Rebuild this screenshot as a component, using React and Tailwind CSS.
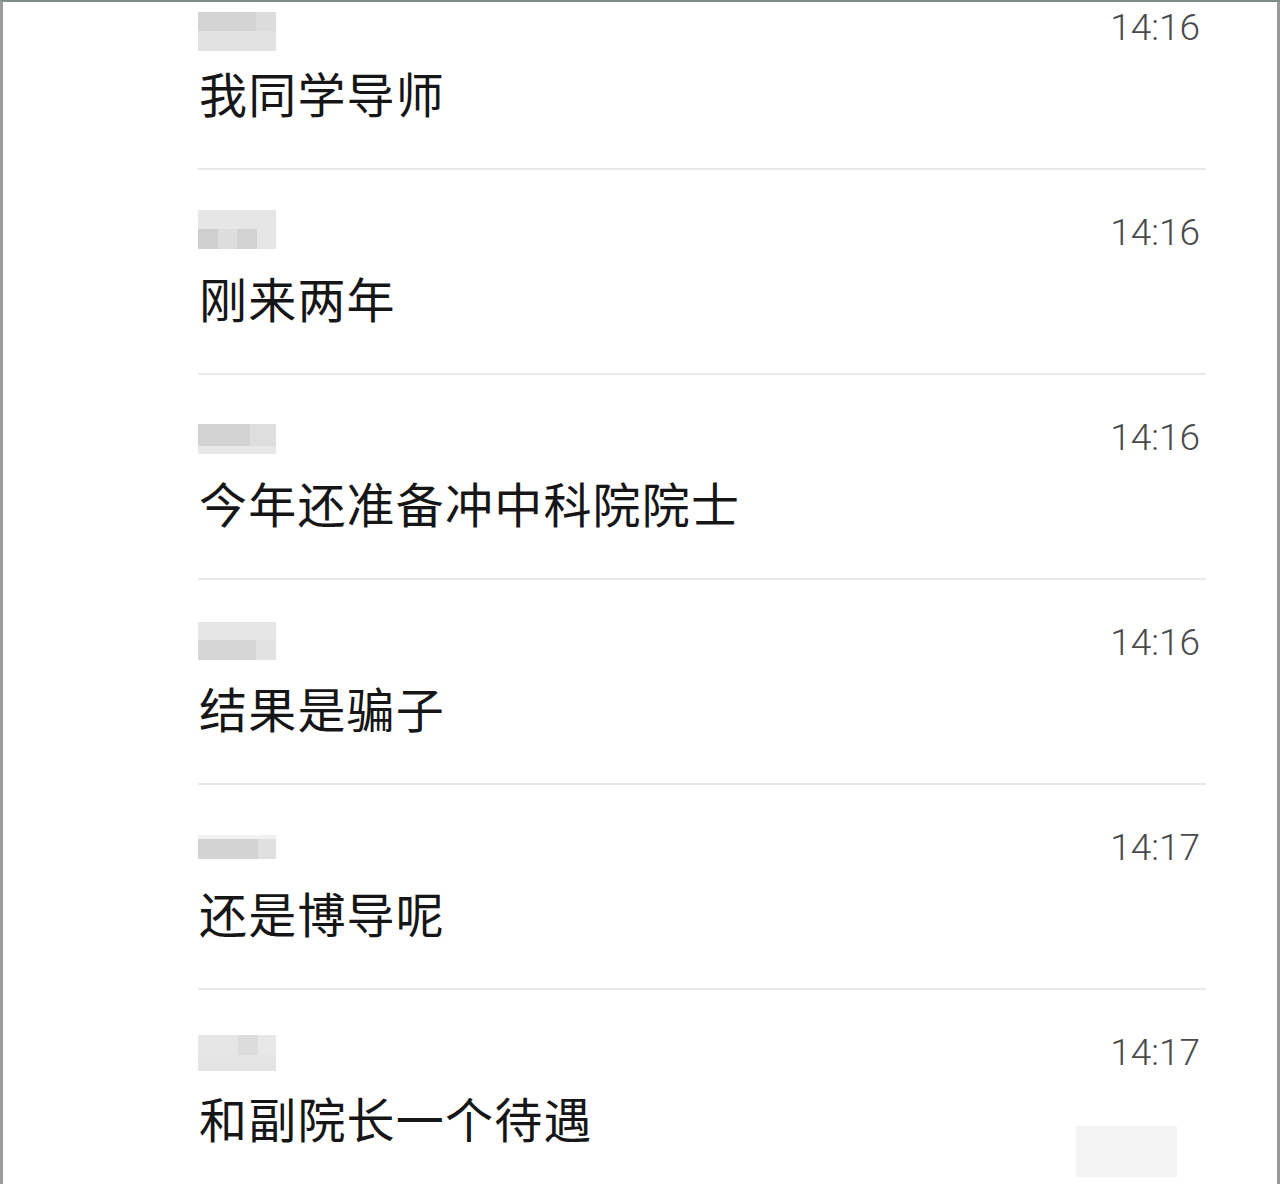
import React from "react";

const rows = [
  { time: "14:16", text: "我同学导师", nameTop: "mt-[47px]", block: "a" },
  { time: "14:16", text: "刚来两年", nameTop: "mt-[40px]", block: "b" },
  { time: "14:16", text: "今年还准备冲中科院院士", nameTop: "mt-[49px]", block: "c" },
  { time: "14:16", text: "结果是骗子", nameTop: "mt-[42px]", block: "d" },
  { time: "14:17", text: "还是博导呢", nameTop: "mt-[50px]", block: "e" },
  { time: "14:17", text: "和副院长一个待遇", nameTop: "mt-[45px]", block: "f" },
];

function NameBlock({ kind }) {
  if (kind === "a") {
    return (
      <div className="flex h-[39px] w-[78px] flex-col">
        <div className="flex h-[19px]">
          <div className="w-[58px] bg-[#d4d4d4]" />
          <div className="w-[20px] bg-[#dcdcdc]" />
        </div>
        <div className="h-[20px] bg-[#e2e2e2]" />
      </div>
    );
  }
  if (kind === "b") {
    return (
      <div className="flex h-[39px] w-[78px] flex-col">
        <div className="h-[19px] bg-[#e6e6e6]" />
        <div className="flex h-[20px]">
          <div className="w-[20px] bg-[#cfcfcf]" />
          <div className="w-[19px] bg-[#dddddd]" />
          <div className="w-[20px] bg-[#d2d2d2]" />
          <div className="w-[19px] bg-[#e6e6e6]" />
        </div>
      </div>
    );
  }
  if (kind === "c") {
    return (
      <div className="flex h-[30px] w-[78px] flex-col">
        <div className="flex h-[22px]">
          <div className="w-[52px] bg-[#d3d3d3]" />
          <div className="w-[26px] bg-[#dedede]" />
        </div>
        <div className="h-[8px] bg-[#e8e8e8]" />
      </div>
    );
  }
  if (kind === "d") {
    return (
      <div className="flex h-[38px] w-[78px] flex-col">
        <div className="h-[18px] bg-[#e6e6e6]" />
        <div className="flex h-[20px]">
          <div className="w-[58px] bg-[#d6d6d6]" />
          <div className="w-[20px] bg-[#e2e2e2]" />
        </div>
      </div>
    );
  }
  if (kind === "e") {
    return (
      <div className="flex h-[24px] w-[78px] flex-col">
        <div className="h-[4px] bg-[#f1f1f1]" />
        <div className="flex h-[20px]">
          <div className="w-[60px] bg-[#d3d3d3]" />
          <div className="w-[18px] bg-[#e0e0e0]" />
        </div>
      </div>
    );
  }
  return (
    <div className="flex h-[36px] w-[78px] flex-col">
      <div className="flex h-[20px]">
        <div className="w-[40px] bg-[#e6e6e6]" />
        <div className="w-[20px] bg-[#dcdcdc]" />
        <div className="w-[18px] bg-[#e8e8e8]" />
      </div>
      <div className="h-[16px] bg-[#e4e4e4]" />
    </div>
  );
}

function Row({ row }) {
  return (
    <div className="flex h-[205px] flex-col border-b-2 border-[#e8e8e8]">
      <div className="relative flex h-[84px] items-start justify-between">
        <div className={row.nameTop}>
          <NameBlock kind={row.block} />
        </div>
        <div
          className="mt-[40px] flex h-[44px] items-center pr-[6px] text-[37px] font-light leading-none text-[#4a4a4a]"
          style={{ fontFamily: "Roboto, 'Liberation Sans', sans-serif" }}
        >
          {row.time}
        </div>
      </div>
      <div
        className="mt-[19px] pl-[1px] text-[48px] leading-[48px] tracking-[1.2px] text-[#161616]"
        style={{ fontFamily: "'Noto Sans CJK SC', 'Noto Sans', sans-serif" }}
      >
        {row.text}
      </div>
    </div>
  );
}

export default function App() {
  return (
    <div className="relative h-[1184px] w-[1280px] overflow-hidden bg-white">
      <div className="flex h-[1184px] w-[1280px] border-l-[3px] border-t-2 border-l-[#9c9c9c] border-t-[#7f8c8c]">
        <div className="flex h-full flex-1 flex-col border-r-[3px] border-[#9a9a9a]">
          <div className="ml-[195px] mr-[71px] mt-[-37px] flex flex-col">
            {rows.map((r, i) => (
              <Row key={i} row={r} />
            ))}
          </div>
        </div>
      </div>
      <div className="absolute left-[1076px] top-[1126px] h-[51px] w-[101px] bg-[#f3f3f3]" />
    </div>
  );
}
